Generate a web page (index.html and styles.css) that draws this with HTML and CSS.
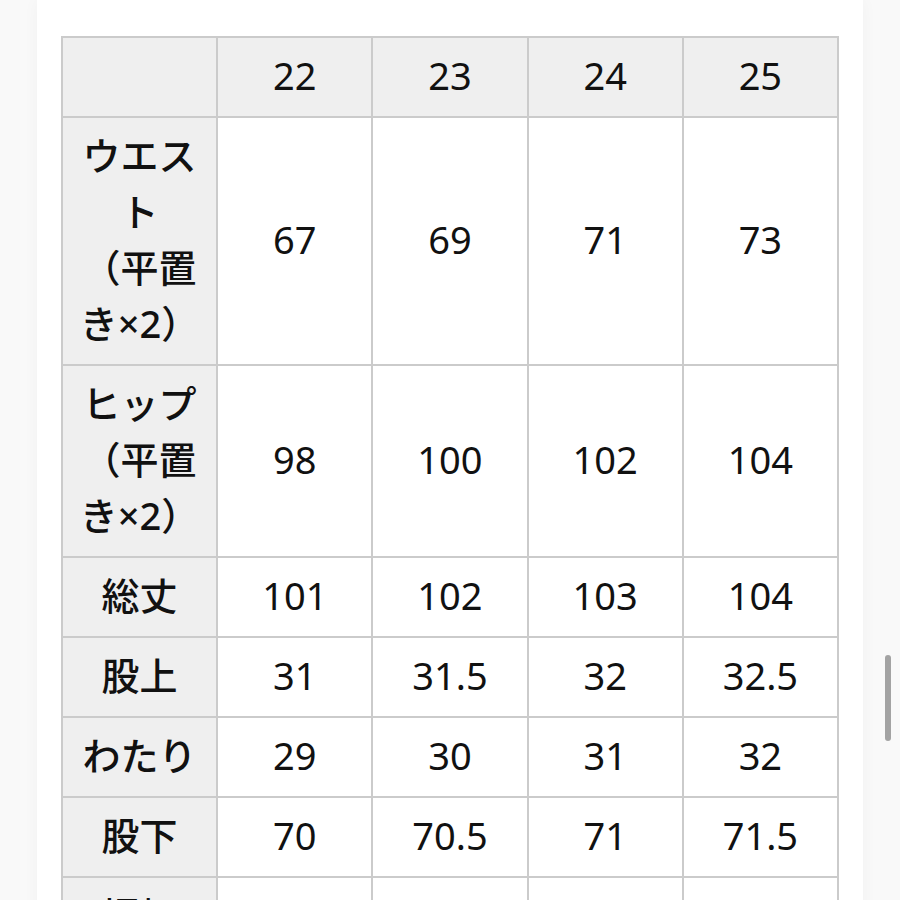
FILE: index.html
```html
<!DOCTYPE html>
<html lang="ja">
<head>
<meta charset="utf-8">
<title>サイズ表</title>
<link rel="stylesheet" href="styles.css">
</head>
<body>
<div class="page">
  <table class="size-table">
    <tr class="head">
      <td class="corner"></td>
      <td>22</td><td>23</td><td>24</td><td>25</td>
    </tr>
    <tr>
      <th>ウエスト<br>（平置き×2）</th>
      <td>67</td><td>69</td><td>71</td><td>73</td>
    </tr>
    <tr>
      <th>ヒップ<br>（平置き×2）</th>
      <td>98</td><td>100</td><td>102</td><td>104</td>
    </tr>
    <tr>
      <th>総丈</th>
      <td>101</td><td>102</td><td>103</td><td>104</td>
    </tr>
    <tr>
      <th>股上</th>
      <td>31</td><td>31.5</td><td>32</td><td>32.5</td>
    </tr>
    <tr>
      <th>わたり</th>
      <td>29</td><td>30</td><td>31</td><td>32</td>
    </tr>
    <tr>
      <th>股下</th>
      <td>70</td><td>70.5</td><td>71</td><td>71.5</td>
    </tr>
    <tr>
      <th>裾幅</th>
      <td>17</td><td>17.5</td><td>18</td><td>18.5</td>
    </tr>
  </table>
</div>
<div class="scrollbar"></div>
</body>
</html>
```
FILE: styles.css
```css
html, body {
  margin: 0;
  padding: 0;
  height: 900px;
  overflow: hidden;
  background: #f9f9f9;
}

.page {
  width: 778px;
  margin: 0 auto;
  padding: 36px 24px 0;
  min-height: 900px;
  background: #ffffff;
  box-shadow: 0 0 16px rgba(0, 0, 0, 0.035);
  box-sizing: content-box;
}

.size-table {
  width: 778px;
  border-collapse: collapse;
  table-layout: fixed;
  font-family: "Noto Sans", "Noto Sans CJK JP", sans-serif;
  font-size: 38px;
  line-height: 56px;
  color: #111111;
}

.size-table td,
.size-table th {
  border: 2px solid #cbcbcb;
  padding: 9px 16px 13px;
  text-align: center;
  vertical-align: middle;
  font-weight: 400;
}

.size-table th {
  background: #efefef;
  font-weight: 500;
}

.size-table .head td {
  background: #efefef;
}

.scrollbar {
  position: absolute;
  left: 885px;
  top: 655px;
  width: 6px;
  height: 86px;
  border-radius: 3px;
  background: #a3a3a3;
}
```
